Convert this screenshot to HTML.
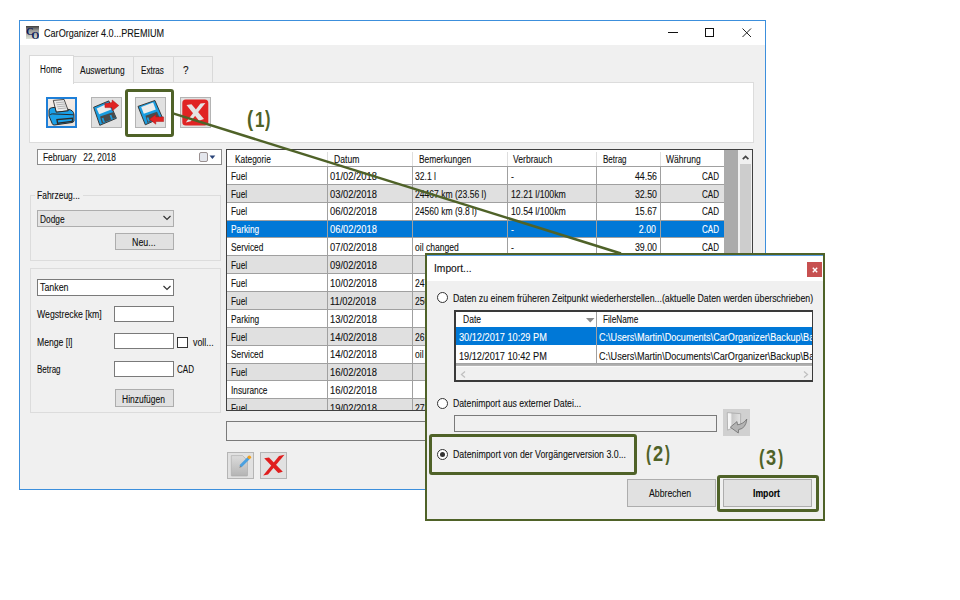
<!DOCTYPE html>
<html><head><meta charset="utf-8"><style>
*{margin:0;padding:0;box-sizing:border-box}
html,body{width:960px;height:600px;background:#fff;overflow:hidden;position:relative;font-family:"Liberation Sans",sans-serif;color:#000}
div{position:absolute}
.t{white-space:nowrap;font-size:10px;line-height:12px;transform-origin:0 0;color:#111;-webkit-text-stroke:0.1px}
.lbl{font-weight:bold;color:#4f6228;font-size:21px;line-height:24px;white-space:nowrap;transform-origin:0 0}
</style></head><body>
<div style="left:19px;top:20px;width:747px;height:470px;border:1px solid #3c8fdc;background:#f0f0f0"></div>
<div style="left:20px;top:21px;width:745px;height:24px;background:#fff"></div>
<svg style="position:absolute;left:26px;top:26px" width="13" height="13" viewBox="0 0 13 13"><defs><linearGradient id="ai" x1="0" y1="0" x2="0" y2="1"><stop offset="0" stop-color="#3e3e3e"/><stop offset="0.35" stop-color="#9a9a98"/><stop offset="1" stop-color="#dde2d6"/></linearGradient></defs><rect width="13" height="13" fill="url(#ai)"/><text x="0" y="9.3" font-family="Liberation Serif" font-weight="bold" font-size="10.5" fill="#0c1a5a">C</text><text x="5.6" y="12.6" font-family="Liberation Serif" font-weight="bold" font-size="10" fill="#0c1a5a" transform="scale(1,1)">O</text></svg>
<div class="t" style="left:43.80px;top:27.50px;transform:scaleX(0.874);font-size:10.4px">CarOrganizer 4.0...PREMIUM</div>
<div style="left:668px;top:32px;width:10px;height:1px;background:#111"></div>
<div style="left:705px;top:28px;width:9px;height:9px;border:1px solid #111"></div>
<svg style="position:absolute;left:742px;top:28px" width="10" height="10"><path d="M0.5 0.5L9 9M9 0.5L0.5 9" stroke="#222" stroke-width="1"/></svg>
<div style="left:73px;top:56px;width:61px;height:27px;border:1px solid #d9d9d9;background:#f0f0f0"></div>
<div style="left:133px;top:56px;width:41px;height:27px;border:1px solid #d9d9d9;background:#f0f0f0"></div>
<div style="left:173px;top:56px;width:40px;height:27px;border:1px solid #d9d9d9;background:#f0f0f0"></div>
<div style="left:29px;top:82px;width:725px;height:61px;border:1px solid #dcdcdc;background:#fff"></div>
<div style="left:29px;top:55px;width:45px;height:29px;border:1px solid #d9d9d9;border-bottom:none;background:#fff"></div>
<div class="t" style="left:39.70px;top:63.50px;transform:scaleX(0.815)">Home</div>
<div class="t" style="left:80.20px;top:64.50px;transform:scaleX(0.845)">Auswertung</div>
<div class="t" style="left:141.40px;top:64.50px;transform:scaleX(0.807)">Extras</div>
<div class="t" style="left:183.00px;top:64.50px;transform:scaleX(1.000)">?</div>
<div style="left:46px;top:97px;width:31px;height:31px;border:2px solid #1e7fd8;background:linear-gradient(#f4ece6,#e6e2de)"></div>
<svg style="position:absolute;left:46px;top:97px" width="31" height="31" viewBox="0 0 31 31"><path d="M7.3 3.4 L18.1 2.5 L22.3 13.8 L10.2 15.2 Z" fill="#ebebeb" stroke="#3a3a3a" stroke-width="0.9"/><path d="M10 5.8L18 5M10.6 7.8L19 7M11.2 9.8L19.8 9M11.8 11.8L20.5 11" stroke="#9a9a9a" stroke-width="0.7"/><path d="M3 13.2 Q3.3 11 5.5 10.8 L9 10.3 L10.2 15.2 L22.3 13.8 L22 12.3 Q27.5 13 28 17.5 L28 23.8 Q27.8 25.2 26 25.5 L8.5 28 Q6.8 28.2 6.3 26.8 L3 19 Z" fill="#1ba0e8" stroke="#2a2a2a" stroke-width="1"/><path d="M4.2 17.8 Q4.8 16.9 6.5 16.9 L27.8 17.8" fill="none" stroke="#2a2a2a" stroke-width="1"/><path d="M10.2 22 L27 20.6 L27 24.8 L11 26.9 Z" fill="#2a2a2a"/><path d="M11.7 23.3 L25.8 22 L25.8 23.8 L12.2 25.6 Z" fill="#1ba0e8"/></svg>
<div style="left:91px;top:97px;width:31px;height:31px;border:1px solid #b4b4b4;background:#e1e1e1"></div>
<svg style="position:absolute;left:91px;top:97px" width="31" height="31" viewBox="0 0 31 31"><path d="M2.6 10.3 L17.8 3.9 L25.4 21.3 L8.8 28.3 Z" fill="#1a9de0" stroke="#333" stroke-width="0.95" stroke-linejoin="round"/><path d="M5.6 11.4 L17.2 6.2 L20.2 12.6 L8.2 17.3 Z" fill="#ececec"/><path d="M9.1 19.6 L22.5 14.9 L24.5 20.8 L10.8 26.6 Z" fill="#4a4a4a"/><path d="M11.5 21 L13 25.3 M19.5 18 L21 22.3" stroke="#1a9de0" stroke-width="1.8"/><path d="M13.8 6.4 L21 5.6 L21.2 3 L27.8 8.5 L21.3 13.8 L21 10.6 L14 10.6 Z" fill="#e02222" stroke="#b01818" stroke-width="0.5"/></svg>
<div style="left:135px;top:97px;width:31px;height:31px;border:1px solid #b4b4b4;background:#e1e1e1"></div>
<svg style="position:absolute;left:135px;top:97px" width="31" height="31" viewBox="0 0 31 31"><path d="M3 9.4 L19.9 3.5 L27.2 20.2 L10.3 27.8 Z" fill="#1a9de0" stroke="#333" stroke-width="0.95" stroke-linejoin="round"/><path d="M6.2 10 L18.1 5.6 L20.8 12.6 L8.8 16.7 Z" fill="#ececec"/><path d="M10.5 18.7 L22 14.8 L24.5 20.5 L12.5 26 Z" fill="#4a4a4a"/><path d="M12.5 20.5 L14 24.3" stroke="#1a9de0" stroke-width="1.8"/><path d="M14.6 22.2 L20.8 17.5 L20.8 19.9 L28.6 19.9 L28.6 24.5 L20.8 24.5 L20.8 27.2 Z" fill="#e02222" stroke="#b01818" stroke-width="0.5"/></svg>
<div style="left:180px;top:97px;width:31px;height:31px;border:1px solid #b4b4b4;background:#e1e1e1"></div>
<svg style="position:absolute;left:180px;top:97px" width="31" height="31" viewBox="0 0 31 31"><rect x="2.3" y="2.6" width="26" height="25.8" rx="3.5" fill="#e02424"/><path d="M6.5 8 L11.5 7.3 L24 22 L19 23.8 Z" fill="#e4e4e4"/><path d="M25.4 5.9 L20.5 6.6 L5.8 25.5 L10.8 24.2 Z" fill="#e4e4e4"/></svg>
<div style="left:125px;top:89px;width:49px;height:48px;border:3px solid #4f6228;border-radius:3px"></div>
<div style="left:37px;top:149px;width:185px;height:16px;border:1px solid #8c8c8c;background:#fff"></div>
<div class="t" style="left:42.70px;top:152.10px;transform:scaleX(0.835);white-space:pre">February   22, 2018</div>
<svg style="position:absolute;left:199px;top:151px" width="17" height="12" viewBox="0 0 17 12"><rect x="0.5" y="1.5" width="8" height="9" rx="1.5" fill="#e4e6ec" stroke="#9a9090"/><path d="M10.5 4.5 L16.3 4.5 L13.4 8 Z" fill="#2a4478"/></svg>
<div style="left:30px;top:195px;width:191px;height:66px;border:1px solid #dcdcdc"></div>
<div style="left:35px;top:190px;width:48px;height:11px;background:#f0f0f0"></div>
<div class="t" style="left:37.10px;top:190.40px;transform:scaleX(0.848)">Fahrzeug...</div>
<div style="left:37px;top:210px;width:137px;height:17px;border:1px solid #adadad;background:#e5e5e5"></div>
<div class="t" style="left:40.40px;top:214.10px;transform:scaleX(0.833)">Dodge</div>
<svg style="position:absolute;left:163px;top:215px" width="8" height="6"><path d="M0.5 1L4 4.5L7.5 1" fill="none" stroke="#333" stroke-width="1.2"/></svg>
<div style="left:115px;top:233px;width:59px;height:17px;border:1px solid #adadad;background:#e1e1e1"></div>
<div class="t" style="left:132.25px;top:236.75px;transform:scaleX(0.885)">Neu...</div>
<div style="left:30px;top:268px;width:191px;height:145px;border:1px solid #dcdcdc"></div>
<div style="left:37px;top:279px;width:137px;height:17px;border:1px solid #7a7a7a;background:#fff"></div>
<div class="t" style="left:39.90px;top:282.10px;transform:scaleX(0.885)">Tanken</div>
<svg style="position:absolute;left:163px;top:285px" width="8" height="6"><path d="M0.5 1L4 4.5L7.5 1" fill="none" stroke="#333" stroke-width="1.2"/></svg>
<div class="t" style="left:37.10px;top:308.90px;transform:scaleX(0.871)">Wegstrecke [km]</div>
<div class="t" style="left:37.30px;top:337.30px;transform:scaleX(0.863)">Menge [l]</div>
<div class="t" style="left:37.30px;top:364.40px;transform:scaleX(0.800)">Betrag</div>
<div style="left:114px;top:306px;width:60px;height:16px;border:1px solid #7a7a7a;background:#fff"></div>
<div style="left:114px;top:333px;width:60px;height:16px;border:1px solid #7a7a7a;background:#fff"></div>
<div style="left:114px;top:361px;width:60px;height:16px;border:1px solid #7a7a7a;background:#fff"></div>
<div style="left:177px;top:337px;width:11px;height:11px;border:1px solid #333;background:#fff"></div>
<div class="t" style="left:192.50px;top:337.30px;transform:scaleX(0.887)">voll...</div>
<div class="t" style="left:176.90px;top:364.40px;transform:scaleX(0.805)">CAD</div>
<div style="left:115px;top:389px;width:59px;height:18px;border:1px solid #adadad;background:#e1e1e1"></div>
<div class="t" style="left:121.70px;top:394.00px;transform:scaleX(0.849)">Hinzufügen</div>
<div style="left:226px;top:149px;width:527px;height:262px;border:1px solid #404040;background:#ababab;overflow:hidden">
<div style="left:0px;top:0px;width:497px;height:16px;background:#fff"></div>
<div style="left:0px;top:16px;width:497px;height:1px;background:#a0a0a0"></div>
<div class="t" style="left:7.50px;top:3.50px;transform:scaleX(0.837)">Kategorie</div>
<div class="t" style="left:106.90px;top:3.50px;transform:scaleX(0.860)">Datum</div>
<div class="t" style="left:191.50px;top:3.50px;transform:scaleX(0.837)">Bemerkungen</div>
<div class="t" style="left:286.00px;top:3.50px;transform:scaleX(0.859)">Verbrauch</div>
<div class="t" style="left:376.00px;top:3.50px;transform:scaleX(0.800)">Betrag</div>
<div class="t" style="left:439.25px;top:3.50px;transform:scaleX(0.854)">Währung</div>
<div style="left:0px;top:17px;width:497px;height:17px;background:#fff"></div>
<div style="left:0px;top:34px;width:497px;height:1px;background:#a0a0a0"></div>
<div class="t" style="left:3.50px;top:20.70px;transform:scaleX(0.830)">Fuel</div>
<div class="t" style="left:103.20px;top:20.70px;transform:scaleX(0.936)">01/02/2018</div>
<div class="t" style="left:188.00px;top:20.70px;transform:scaleX(0.855)">32.1 l</div>
<div class="t" style="left:283.50px;top:20.70px;transform:scaleX(0.873)">-</div>
<div class="t" style="left:128.53px;top:20.70px;width:301px;text-align:right;transform:scaleX(0.880);transform-origin:100% 0;letter-spacing:0.000px">44.56</div>
<div class="t" style="left:190.78px;top:20.70px;width:301px;text-align:right;transform:scaleX(0.805);transform-origin:100% 0;letter-spacing:0.000px">CAD</div>
<div style="left:0px;top:35px;width:497px;height:17px;background:#e0e0e0"></div>
<div style="left:0px;top:52px;width:497px;height:1px;background:#a0a0a0"></div>
<div class="t" style="left:3.50px;top:38.57px;transform:scaleX(0.830)">Fuel</div>
<div class="t" style="left:103.20px;top:38.57px;transform:scaleX(0.936)">03/02/2018</div>
<div class="t" style="left:188.00px;top:38.57px;transform:scaleX(0.855)">24467 km (23.56 l)</div>
<div class="t" style="left:283.50px;top:38.57px;transform:scaleX(0.873)">12.21 l/100km</div>
<div class="t" style="left:128.53px;top:38.57px;width:301px;text-align:right;transform:scaleX(0.880);transform-origin:100% 0;letter-spacing:0.000px">32.50</div>
<div class="t" style="left:190.78px;top:38.57px;width:301px;text-align:right;transform:scaleX(0.805);transform-origin:100% 0;letter-spacing:0.000px">CAD</div>
<div style="left:0px;top:53px;width:497px;height:17px;background:#fff"></div>
<div style="left:0px;top:70px;width:497px;height:1px;background:#a0a0a0"></div>
<div class="t" style="left:3.50px;top:56.44px;transform:scaleX(0.830)">Fuel</div>
<div class="t" style="left:103.20px;top:56.44px;transform:scaleX(0.936)">06/02/2018</div>
<div class="t" style="left:188.00px;top:56.44px;transform:scaleX(0.855)">24560 km (9.8 l)</div>
<div class="t" style="left:283.50px;top:56.44px;transform:scaleX(0.873)">10.54 l/100km</div>
<div class="t" style="left:128.53px;top:56.44px;width:301px;text-align:right;transform:scaleX(0.880);transform-origin:100% 0;letter-spacing:0.000px">15.67</div>
<div class="t" style="left:190.78px;top:56.44px;width:301px;text-align:right;transform:scaleX(0.805);transform-origin:100% 0;letter-spacing:0.000px">CAD</div>
<div style="left:0px;top:71px;width:497px;height:16px;background:#0078d7"></div>
<div style="left:0px;top:87px;width:497px;height:1px;background:#a0a0a0"></div>
<div class="t" style="left:3.50px;top:74.31px;transform:scaleX(0.830);color:#fff">Parking</div>
<div class="t" style="left:103.20px;top:74.31px;transform:scaleX(0.936);color:#fff">06/02/2018</div>
<div class="t" style="left:283.50px;top:74.31px;transform:scaleX(0.873);color:#fff">-</div>
<div class="t" style="left:128.03px;top:74.31px;width:301px;text-align:right;transform:scaleX(0.880);transform-origin:100% 0;letter-spacing:0.000px;color:#fff">2.00</div>
<div class="t" style="left:190.78px;top:74.31px;width:301px;text-align:right;transform:scaleX(0.805);transform-origin:100% 0;letter-spacing:0.000px;color:#fff">CAD</div>
<div style="left:0px;top:88px;width:497px;height:17px;background:#fff"></div>
<div style="left:0px;top:105px;width:497px;height:1px;background:#a0a0a0"></div>
<div class="t" style="left:3.50px;top:92.18px;transform:scaleX(0.830)">Serviced</div>
<div class="t" style="left:103.20px;top:92.18px;transform:scaleX(0.936)">07/02/2018</div>
<div class="t" style="left:188.00px;top:92.18px;transform:scaleX(0.855)">oil changed</div>
<div class="t" style="left:283.50px;top:92.18px;transform:scaleX(0.873)">-</div>
<div class="t" style="left:128.53px;top:92.18px;width:301px;text-align:right;transform:scaleX(0.880);transform-origin:100% 0;letter-spacing:0.000px">39.00</div>
<div class="t" style="left:190.78px;top:92.18px;width:301px;text-align:right;transform:scaleX(0.805);transform-origin:100% 0;letter-spacing:0.000px">CAD</div>
<div style="left:0px;top:106px;width:497px;height:17px;background:#e0e0e0"></div>
<div style="left:0px;top:123px;width:497px;height:1px;background:#a0a0a0"></div>
<div class="t" style="left:3.50px;top:110.05px;transform:scaleX(0.830)">Fuel</div>
<div class="t" style="left:103.20px;top:110.05px;transform:scaleX(0.936)">09/02/2018</div>
<div class="t" style="left:283.50px;top:110.05px;transform:scaleX(0.873)">-</div>
<div class="t" style="left:128.53px;top:110.05px;width:301px;text-align:right;transform:scaleX(0.880);transform-origin:100% 0;letter-spacing:0.000px">20.00</div>
<div class="t" style="left:190.78px;top:110.05px;width:301px;text-align:right;transform:scaleX(0.805);transform-origin:100% 0;letter-spacing:0.000px">CAD</div>
<div style="left:0px;top:124px;width:497px;height:17px;background:#fff"></div>
<div style="left:0px;top:141px;width:497px;height:1px;background:#a0a0a0"></div>
<div class="t" style="left:3.50px;top:127.92px;transform:scaleX(0.830)">Fuel</div>
<div class="t" style="left:103.20px;top:127.92px;transform:scaleX(0.936)">10/02/2018</div>
<div class="t" style="left:188.00px;top:127.92px;transform:scaleX(0.855)">24780 km (30.1 l)</div>
<div class="t" style="left:283.50px;top:127.92px;transform:scaleX(0.873)">13.58 l/100km</div>
<div class="t" style="left:128.53px;top:127.92px;width:301px;text-align:right;transform:scaleX(0.880);transform-origin:100% 0;letter-spacing:0.000px">41.20</div>
<div class="t" style="left:190.78px;top:127.92px;width:301px;text-align:right;transform:scaleX(0.805);transform-origin:100% 0;letter-spacing:0.000px">CAD</div>
<div style="left:0px;top:142px;width:497px;height:17px;background:#e0e0e0"></div>
<div style="left:0px;top:159px;width:497px;height:1px;background:#a0a0a0"></div>
<div class="t" style="left:3.50px;top:145.79px;transform:scaleX(0.830)">Fuel</div>
<div class="t" style="left:103.20px;top:145.79px;transform:scaleX(0.936)">11/02/2018</div>
<div class="t" style="left:188.00px;top:145.79px;transform:scaleX(0.855)">25010 km (28.9 l)</div>
<div class="t" style="left:283.50px;top:145.79px;transform:scaleX(0.873)">12.56 l/100km</div>
<div class="t" style="left:128.53px;top:145.79px;width:301px;text-align:right;transform:scaleX(0.880);transform-origin:100% 0;letter-spacing:0.000px">39.80</div>
<div class="t" style="left:190.78px;top:145.79px;width:301px;text-align:right;transform:scaleX(0.805);transform-origin:100% 0;letter-spacing:0.000px">CAD</div>
<div style="left:0px;top:160px;width:497px;height:17px;background:#fff"></div>
<div style="left:0px;top:177px;width:497px;height:1px;background:#a0a0a0"></div>
<div class="t" style="left:3.50px;top:163.66px;transform:scaleX(0.830)">Parking</div>
<div class="t" style="left:103.20px;top:163.66px;transform:scaleX(0.936)">13/02/2018</div>
<div class="t" style="left:283.50px;top:163.66px;transform:scaleX(0.873)">-</div>
<div class="t" style="left:128.03px;top:163.66px;width:301px;text-align:right;transform:scaleX(0.880);transform-origin:100% 0;letter-spacing:0.000px">3.00</div>
<div class="t" style="left:190.78px;top:163.66px;width:301px;text-align:right;transform:scaleX(0.805);transform-origin:100% 0;letter-spacing:0.000px">CAD</div>
<div style="left:0px;top:178px;width:497px;height:17px;background:#e0e0e0"></div>
<div style="left:0px;top:195px;width:497px;height:1px;background:#a0a0a0"></div>
<div class="t" style="left:3.50px;top:181.53px;transform:scaleX(0.830)">Fuel</div>
<div class="t" style="left:103.20px;top:181.53px;transform:scaleX(0.936)">14/02/2018</div>
<div class="t" style="left:188.00px;top:181.53px;transform:scaleX(0.855)">26120 km (31.2 l)</div>
<div class="t" style="left:283.50px;top:181.53px;transform:scaleX(0.873)">11.02 l/100km</div>
<div class="t" style="left:128.53px;top:181.53px;width:301px;text-align:right;transform:scaleX(0.880);transform-origin:100% 0;letter-spacing:0.000px">42.10</div>
<div class="t" style="left:190.78px;top:181.53px;width:301px;text-align:right;transform:scaleX(0.805);transform-origin:100% 0;letter-spacing:0.000px">CAD</div>
<div style="left:0px;top:196px;width:497px;height:17px;background:#fff"></div>
<div style="left:0px;top:213px;width:497px;height:1px;background:#a0a0a0"></div>
<div class="t" style="left:3.50px;top:199.40px;transform:scaleX(0.830)">Serviced</div>
<div class="t" style="left:103.20px;top:199.40px;transform:scaleX(0.936)">14/02/2018</div>
<div class="t" style="left:188.00px;top:199.40px;transform:scaleX(0.855)">oil filter</div>
<div class="t" style="left:283.50px;top:199.40px;transform:scaleX(0.873)">-</div>
<div class="t" style="left:128.53px;top:199.40px;width:301px;text-align:right;transform:scaleX(0.880);transform-origin:100% 0;letter-spacing:0.000px">55.00</div>
<div class="t" style="left:190.78px;top:199.40px;width:301px;text-align:right;transform:scaleX(0.805);transform-origin:100% 0;letter-spacing:0.000px">CAD</div>
<div style="left:0px;top:214px;width:497px;height:16px;background:#e0e0e0"></div>
<div style="left:0px;top:230px;width:497px;height:1px;background:#a0a0a0"></div>
<div class="t" style="left:3.50px;top:217.27px;transform:scaleX(0.830)">Fuel</div>
<div class="t" style="left:103.20px;top:217.27px;transform:scaleX(0.936)">16/02/2018</div>
<div class="t" style="left:283.50px;top:217.27px;transform:scaleX(0.873)">-</div>
<div class="t" style="left:128.53px;top:217.27px;width:301px;text-align:right;transform:scaleX(0.880);transform-origin:100% 0;letter-spacing:0.000px">18.00</div>
<div class="t" style="left:190.78px;top:217.27px;width:301px;text-align:right;transform:scaleX(0.805);transform-origin:100% 0;letter-spacing:0.000px">CAD</div>
<div style="left:0px;top:231px;width:497px;height:17px;background:#fff"></div>
<div style="left:0px;top:248px;width:497px;height:1px;background:#a0a0a0"></div>
<div class="t" style="left:3.50px;top:235.14px;transform:scaleX(0.830)">Insurance</div>
<div class="t" style="left:103.20px;top:235.14px;transform:scaleX(0.936)">16/02/2018</div>
<div class="t" style="left:283.50px;top:235.14px;transform:scaleX(0.873)">-</div>
<div class="t" style="left:128.14px;top:235.14px;width:301px;text-align:right;transform:scaleX(0.880);transform-origin:100% 0;letter-spacing:0.000px">120.00</div>
<div class="t" style="left:190.78px;top:235.14px;width:301px;text-align:right;transform:scaleX(0.805);transform-origin:100% 0;letter-spacing:0.000px">CAD</div>
<div style="left:0px;top:249px;width:497px;height:17px;background:#e0e0e0"></div>
<div style="left:0px;top:266px;width:497px;height:1px;background:#a0a0a0"></div>
<div class="t" style="left:3.50px;top:253.01px;transform:scaleX(0.830)">Fuel</div>
<div class="t" style="left:103.20px;top:253.01px;transform:scaleX(0.936)">19/02/2018</div>
<div class="t" style="left:188.00px;top:253.01px;transform:scaleX(0.855)">27310 km (30.5 l)</div>
<div class="t" style="left:283.50px;top:253.01px;transform:scaleX(0.873)">11.40 l/100km</div>
<div class="t" style="left:128.53px;top:253.01px;width:301px;text-align:right;transform:scaleX(0.880);transform-origin:100% 0;letter-spacing:0.000px">40.90</div>
<div class="t" style="left:190.78px;top:253.01px;width:301px;text-align:right;transform:scaleX(0.805);transform-origin:100% 0;letter-spacing:0.000px">CAD</div>
<div style="left:100px;top:2px;width:1px;height:14px;background:#dedede"></div>
<div style="left:100px;top:16px;width:1px;height:262px;background:#a0a0a0"></div>
<div style="left:185px;top:2px;width:1px;height:14px;background:#dedede"></div>
<div style="left:185px;top:16px;width:1px;height:262px;background:#a0a0a0"></div>
<div style="left:280px;top:2px;width:1px;height:14px;background:#dedede"></div>
<div style="left:280px;top:16px;width:1px;height:262px;background:#a0a0a0"></div>
<div style="left:369px;top:2px;width:1px;height:14px;background:#dedede"></div>
<div style="left:369px;top:16px;width:1px;height:262px;background:#a0a0a0"></div>
<div style="left:433px;top:2px;width:1px;height:14px;background:#dedede"></div>
<div style="left:433px;top:16px;width:1px;height:262px;background:#a0a0a0"></div>
<div style="left:511px;top:0px;width:14px;height:262px;background:#f0f0f0"></div>
<div style="left:513px;top:14px;width:11px;height:250px;background:#cdcdcd"></div>
<svg style="position:absolute;left:514px;top:4px" width="9" height="7"><path d="M1.8 5.2L4.6 2.4L7.4 5.2" fill="none" stroke="#444" stroke-width="1.7"/></svg>
</div>
<div style="left:226px;top:421px;width:527px;height:20px;border:1px solid #7a7a7a;background:#f0f0f0"></div>
<div style="left:227px;top:452px;width:27px;height:27px;border:1px solid #b5b5b5;background:#e1e1e1"></div>
<svg style="position:absolute;left:227px;top:452px" width="27" height="27" viewBox="0 0 27 27"><defs><linearGradient id="dg" x1="0" y1="0" x2="0" y2="1"><stop offset="0" stop-color="#dcdcdc"/><stop offset="1" stop-color="#b4b4b4"/></linearGradient></defs><path d="M4.3 3.6 L15.5 3.6 L20.5 8.5 L20.5 23.6 Q20.5 24 20 24 L4.8 24 Q4.3 24 4.3 23.5 Z" fill="url(#dg)" stroke="#a8a8a8" stroke-width="0.6"/><path d="M13.5 14.3 L22 5.8" stroke="#4aa0e0" stroke-width="3"/><circle cx="22.3" cy="5.3" r="1.8" fill="#f0a020"/><path d="M12.3 15.8 L13.2 13.8 L14.5 15 Z" fill="#777"/></svg>
<div style="left:260px;top:452px;width:27px;height:27px;border:1px solid #b5b5b5;background:#e1e1e1"></div>
<svg style="position:absolute;left:260px;top:452px" width="27" height="27" viewBox="0 0 27 27"><path d="M4.2 6.3 L9 5.6 L22.8 19.7 L18.3 21 Z" fill="#e01e1e"/><path d="M24.5 2.8 L19 3.9 L3.2 23.5 L8 22.4 Z" fill="#e01e1e"/></svg>
<svg style="position:absolute;left:0;top:0" width="960" height="600"><line x1="173" y1="113.4" x2="621" y2="253.5" stroke="#4f6228" stroke-width="2.5"/></svg>
<div class="lbl" style="left:246.64px;top:106.63px;transform:scale(0.875,1.020)">(</div>
<div class="lbl" style="left:254.69px;top:106.68px;transform:scale(0.809,1.064)">1</div>
<div class="lbl" style="left:265.37px;top:106.63px;transform:scale(0.781,1.020)">)</div>
<div style="left:425px;top:253px;width:400px;height:268px;border:2px solid #4f6228;background:#f0f0f0">
<div style="left:0px;top:0px;width:396px;height:1px;background:#5a9de0"></div>
<div style="left:0px;top:1px;width:396px;height:25px;background:#fff"></div>
<div class="t" style="left:6.75px;top:8.40px;transform:scaleX(1.025)">Import...</div>
<div style="left:380px;top:7px;width:15px;height:15px;background:#c75050"></div>
<svg style="position:absolute;left:384.5px;top:11.5px" width="6" height="6"><path d="M0.8 0.8L5.2 5.2M5.2 0.8L0.8 5.2" stroke="#fff" stroke-width="1.4"/></svg>
<div style="left:10.0px;top:37.0px;width:11px;height:11px;border:1px solid #333;border-radius:50%;background:#fff"></div>
<div class="t" style="left:25.90px;top:38.40px;transform:scaleX(0.878)">Daten zu einem früheren Zeitpunkt wiederherstellen...(aktuelle Daten werden überschrieben)</div>
<div style="left:27px;top:55px;width:359px;height:72px;border-style:solid;border-color:#3a3a3a;border-width:2px 1px 2px 2px;background:#f0f0f0;overflow:hidden">
<div style="left:0px;top:0px;width:356px;height:15px;background:#fff"></div>
<div style="left:140px;top:0px;width:1px;height:51px;background:#a0a0a0"></div>
<div class="t" style="left:6.90px;top:2.20px;transform:scaleX(0.852)">Date</div>
<svg style="position:absolute;left:129.5px;top:5.5px" width="9" height="5"><path d="M0 0L8.5 0L4.25 4.5Z" fill="#8a8a8a"/></svg>
<div class="t" style="left:147.10px;top:2.20px;transform:scaleX(0.823)">FileName</div>
<div style="left:0px;top:15px;width:356px;height:18px;background:#0078d7"></div>
<div style="left:140px;top:15px;width:1px;height:18px;background:#a0a0a0"></div>
<div style="left:0px;top:33px;width:356px;height:18px;background:#fff"></div>
<div style="left:140px;top:33px;width:1px;height:18px;background:#a0a0a0"></div>
<div class="t" style="left:2.75px;top:20.10px;transform:scaleX(0.918);color:#fff">30/12/2017 10:29 PM</div>
<div class="t" style="left:143.00px;top:20.10px;transform:scaleX(0.909);color:#fff">C:\Users\Martin\Documents\CarOrganizer\Backup\Backup_1.zip</div>
<div class="t" style="left:2.75px;top:38.50px;transform:scaleX(0.918)">19/12/2017 10:42 PM</div>
<div class="t" style="left:143.00px;top:38.50px;transform:scaleX(0.909)">C:\Users\Martin\Documents\CarOrganizer\Backup\Backup_2.zip</div>
<div style="left:0px;top:51px;width:356px;height:3px;background:linear-gradient(#a0a0a0,#b8b8b8)"></div>
<div style="left:0px;top:54px;width:356px;height:1px;background:#fafafa"></div>
<svg style="position:absolute;left:4px;top:59px" width="6" height="7"><path d="M5 0.5L1.5 3.5L5 6.5" fill="none" stroke="#c0c0c0" stroke-width="1.3"/></svg>
<svg style="position:absolute;left:347px;top:59px" width="6" height="7"><path d="M1 0.5L4.5 3.5L1 6.5" fill="none" stroke="#c0c0c0" stroke-width="1.3"/></svg>
</div>
<div style="left:9.5px;top:142.5px;width:11px;height:11px;border:1px solid #333;border-radius:50%;background:#fff"></div>
<div class="t" style="left:25.90px;top:143.20px;transform:scaleX(0.870)">Datenimport aus externer Datei...</div>
<div style="left:27px;top:160px;width:263px;height:17px;border:1px solid #7a7a7a;background:#f0f0f0"></div>
<div style="left:296px;top:154px;width:27px;height:27px;background:#d0d0d0"></div>
<svg style="position:absolute;left:296px;top:154px" width="27" height="27" viewBox="0 0 27 27"><defs><linearGradient id="dr" x1="0" y1="0" x2="1" y2="0"><stop offset="0" stop-color="#fafafa"/><stop offset="0.25" stop-color="#f2f2f2"/><stop offset="0.35" stop-color="#c8c8c8"/><stop offset="1" stop-color="#e4e4e4"/></linearGradient></defs><path d="M4.3 3.6 L17.7 4.7 L17.5 15.5 L4.6 21.1 Z" fill="url(#dr)" stroke="#a0a0a0" stroke-width="0.7"/><path d="M7.3 18.2 L14 12.6 L14.5 15.8 Q20.5 15 23.8 10 Q23 19.5 15.6 20.6 L15.3 24 Z" fill="#b4b4b4" stroke="#6e6e6e" stroke-width="0.8" stroke-linejoin="round"/></svg>
<div style="left:9.5px;top:193.5px;width:11px;height:11px;border:1px solid #333;border-radius:50%;background:#fff"></div><div style="left:12.5px;top:196.5px;width:5px;height:5px;border-radius:50%;background:#333"></div>
<div class="t" style="left:25.90px;top:194.00px;transform:scaleX(0.879)">Datenimport von der Vorgängerversion 3.0...</div>
<div style="left:200px;top:224px;width:89px;height:28px;border:1px solid #adadad;background:#e1e1e1"></div>
<div class="t" style="left:222.00px;top:233.20px;transform:scaleX(0.871)">Abbrechen</div>
<div style="left:296px;top:224px;width:89px;height:28px;border:1px solid #adadad;background:#e1e1e1"></div>
<div class="t" style="left:326.10px;top:233.20px;transform:scaleX(0.866);color:#000;font-weight:bold">Import</div>
</div>
<div style="left:429px;top:434px;width:208px;height:41px;border:3px solid #4f6228;border-radius:3px"></div>
<div style="left:717px;top:475px;width:102px;height:37px;border:3px solid #4f6228;border-radius:3px"></div>
<div class="lbl" style="left:645.88px;top:440.50px;transform:scale(0.750,1.030)">(</div>
<div class="lbl" style="left:652.80px;top:440.68px;transform:scale(0.867,1.064)">2</div>
<div class="lbl" style="left:664.78px;top:440.50px;transform:scale(0.719,1.030)">)</div>
<div class="lbl" style="left:758.66px;top:444.50px;transform:scale(0.797,1.030)">(</div>
<div class="lbl" style="left:765.90px;top:444.68px;transform:scale(0.867,1.064)">3</div>
<div class="lbl" style="left:777.67px;top:444.50px;transform:scale(0.750,1.030)">)</div>
</body></html>
